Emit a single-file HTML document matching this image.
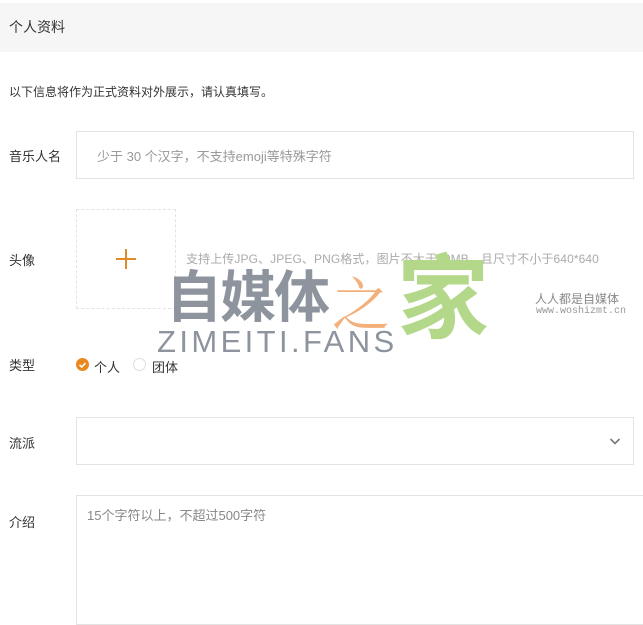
<!DOCTYPE html>
<html><head><meta charset="utf-8"><style>
*{margin:0;padding:0;box-sizing:border-box}
body{width:643px;height:611px;overflow:hidden;background:#fff;font-family:"Liberation Sans","Noto Sans CJK SC",sans-serif;color:#333;position:relative}
.a{position:absolute}
.hdr{left:0;top:3px;width:643px;height:49px;background:#f6f6f6;font-size:14px;line-height:49px;padding-left:9px;color:#333}
.lbl{font-size:13px;color:#333;left:9px}
.box{border:1px solid #e3e3e3;background:#fff}
.ph{color:#999;font-size:13px}
</style></head><body>
<div class="a hdr">个人资料</div>
<div class="a" style="left:9px;top:83px;font-size:12px;color:#333">以下信息将作为正式资料对外展示，请认真填写。</div>

<div class="a lbl" style="top:146px">音乐人名</div>
<div class="a box" style="left:76px;top:131px;width:558px;height:48px"></div>
<div class="a ph" style="left:97px;top:146px">少于 30 个汉字，不支持emoji等特殊字符</div>

<div class="a lbl" style="top:250px">头像</div>
<div class="a" style="left:76px;top:209px;width:100px;height:100px;border:1px dashed #e3e3e3"></div>
<div class="a" style="left:116px;top:258px;width:20px;height:2px;background:#e08a2a"></div>
<div class="a" style="left:125px;top:249px;width:2px;height:20px;background:#e08a2a"></div>
<div class="a" style="left:186px;top:250px;font-size:12px;color:#aaa;letter-spacing:0.1px">支持上传JPG、JPEG、PNG格式，图片不大于10MB，且尺寸不小于640*640</div>

<div class="a lbl" style="top:355px">类型</div>
<div class="a" style="left:76px;top:358px;width:13px;height:13px;border-radius:50%;background:#e8891f"></div>
<svg class="a" style="left:76px;top:358px" width="13" height="13"><path d="M3.5 6.8l2.2 2.2 3.8-4" stroke="#fff" stroke-width="1.6" fill="none"/></svg>
<div class="a" style="left:94px;top:357px;font-size:13px">个人</div>
<div class="a" style="left:133px;top:358px;width:13px;height:13px;border-radius:50%;border:1px solid #ddd"></div>
<div class="a" style="left:152px;top:357px;font-size:13px">团体</div>

<div class="a lbl" style="top:433px">流派</div>
<div class="a box" style="left:76px;top:417px;width:558px;height:48px"></div>
<svg class="a" style="left:609px;top:437px" width="12" height="9"><path d="M1.5 2l4.5 4.5 4.5-4.5" stroke="#777" stroke-width="1.6" fill="none"/></svg>

<div class="a lbl" style="top:512px">介绍</div>
<div class="a box" style="left:76px;top:495px;width:580px;height:130px"></div>
<div class="a ph" style="left:87px;top:505px;color:#888">15个字符以上，不超过500字符</div>

<!-- watermark -->
<div class="a" style="left:166px;top:266px;font-size:56px;font-weight:bold;color:#8d949e;letter-spacing:-2px;line-height:64px">自媒体</div>
<div class="a" style="left:332px;top:268px;font-size:58px;color:#f4b07a;line-height:64px;font-family:'Noto Serif CJK SC',serif">之</div>
<div class="a" style="left:397px;top:250px;font-size:92px;font-weight:bold;color:#b3d889;line-height:100px">家</div>
<div class="a" style="left:157px;top:325px;font-size:31px;color:#8d949e;letter-spacing:3.4px;line-height:34px">ZIMEITI.FANS</div>
<div class="a" style="left:535px;top:290px;font-size:12px;color:#888">人人都是自媒体</div>
<div class="a" style="left:536px;top:306px;font-size:10px;color:#999;font-family:'Liberation Mono',monospace">www.woshizmt.cn</div>
</body></html>
